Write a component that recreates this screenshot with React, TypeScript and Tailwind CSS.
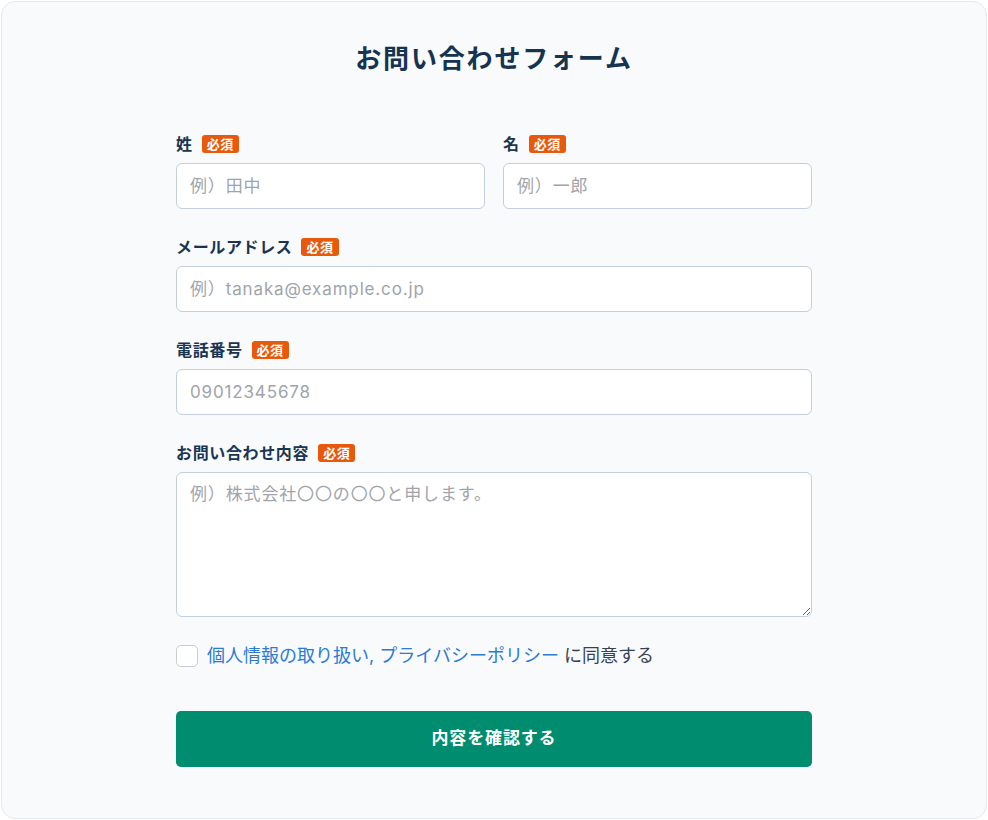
import React from "react";

const font = { fontFamily: 'Inter, "Noto Sans CJK JP", sans-serif' };

function Badge() {
  return (
    <span className="ml-[9px] inline-flex h-[18px] items-center rounded-[3px] bg-[#e8590c] px-[5px] text-[13px] font-bold leading-none tracking-[0.04em] text-white">
      必須
    </span>
  );
}

function Label({ children }: { children: React.ReactNode }) {
  return (
    <div className="flex h-[20px] items-center">
      <span className="text-[16px] font-bold leading-[20px] tracking-[0.04em] text-[#1a3550]">{children}</span>
      <Badge />
    </div>
  );
}

const inputCls =
  "mt-[9px] block h-[46px] w-full rounded-[6px] border border-[#c3cfdc] bg-white px-[13px] text-[17px] tracking-[0.05em] text-[#1f2937] outline-none placeholder:text-[#a0a4aa]";

export default function App() {
  return (
    <div className="min-h-[820px] bg-white p-px" style={font}>
      <div className="h-[818px] rounded-[14px] border border-[#e6e9ee] bg-[#f8fafc] pt-[37px]">
        <h1 className="h-[40px] text-center text-[26px] font-bold leading-[40px] tracking-[0.07em] text-[#163350]">
          お問い合わせフォーム
        </h1>
        <form className="mx-auto mt-[55px] w-[636px]">
          <div className="grid grid-cols-2 gap-[18px]">
            <div>
              <Label>姓</Label>
              <input className={inputCls} placeholder="例）田中" />
            </div>
            <div>
              <Label>名</Label>
              <input className={inputCls} placeholder="例）一郎" />
            </div>
          </div>
          <div className="mt-[28px]">
            <Label>メールアドレス</Label>
            <input className={inputCls} placeholder="例）tanaka@example.co.jp" />
          </div>
          <div className="mt-[28px]">
            <Label>電話番号</Label>
            <input className={inputCls} placeholder="09012345678" />
          </div>
          <div className="mt-[28px]">
            <Label>お問い合わせ内容</Label>
            <textarea
              className="mt-[9px] block h-[145px] w-full rounded-[6px] border border-[#c3cfdc] bg-white px-[13px] py-[9px] text-[17px] tracking-[0.05em] text-[#1f2937] outline-none placeholder:text-[#a0a4aa]"
              placeholder="例）株式会社〇〇の〇〇と申します。"
            />
          </div>
          <label className="mt-[28px] flex items-center">
            <span className="h-[22px] w-[22px] rounded-[5px] border border-[#c6ccd5] bg-white" />
            <span className="ml-[9px] text-[18px] leading-[22px] text-[#374151]">
              <span className="text-[#2b7bd4]">個人情報の取り扱い, プライバシーポリシー</span> に同意する
            </span>
          </label>
          <button
            type="button"
            className="mt-[44px] flex h-[56px] w-full items-center justify-center rounded-[5px] bg-[#008c6e] text-[17px] font-bold tracking-[0.05em] text-white"
          >
            内容を確認する
          </button>
        </form>
      </div>
    </div>
  );
}
